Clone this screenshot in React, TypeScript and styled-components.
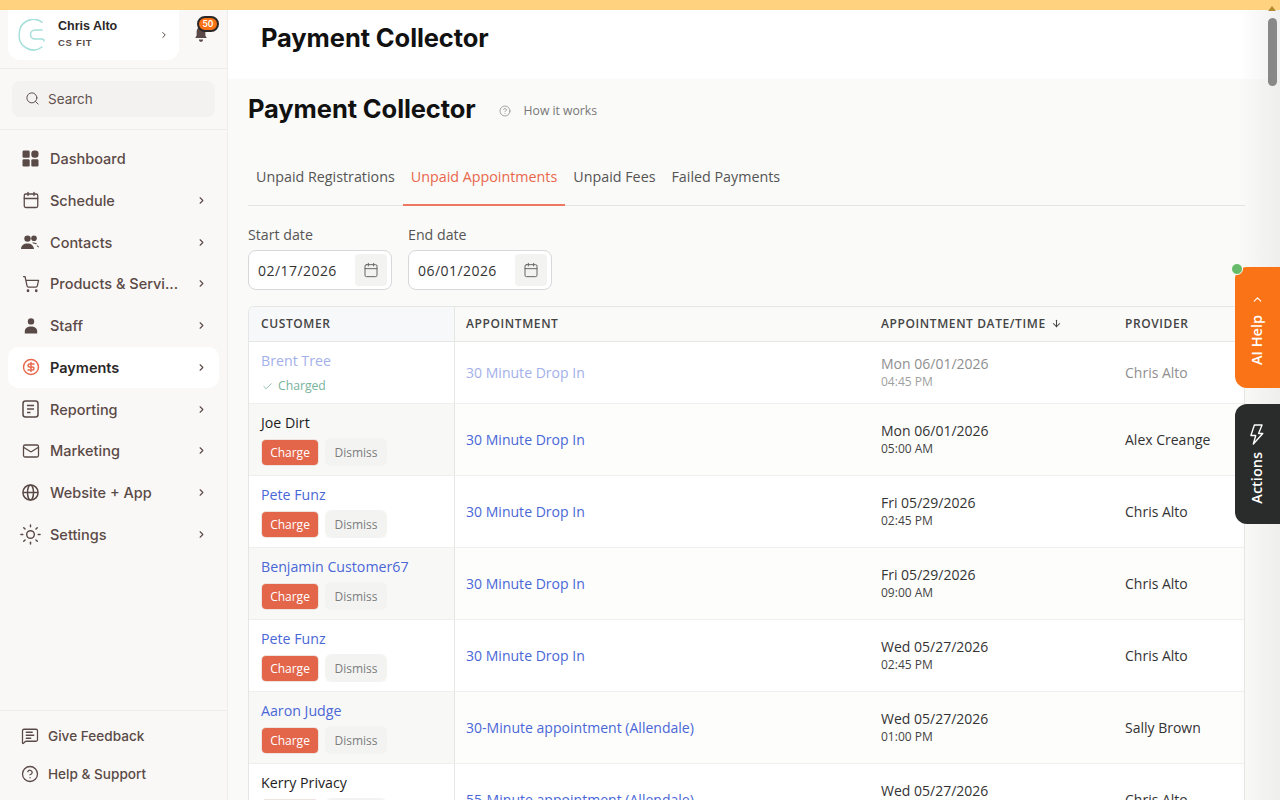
import React from 'react';
import styled, { createGlobalStyle } from 'styled-components';
import { Calendar, ChevronLeft, ChevronRight, CircleDollarSign, CircleHelp, Check, ArrowDown, Mail, Search, ShoppingCart, Sun, MessageSquareText } from 'lucide-react';

const Global = createGlobalStyle`
  html, body { margin: 0; padding: 0; height: 100%; overflow: hidden; background: #fafaf8; }
  * { box-sizing: border-box; }
`;

const Page = styled.div`
  position: relative; width: 1280px; height: 800px; overflow: hidden;
  display: flex; flex-direction: column;
  font-family: "Open Sans", sans-serif; color: #222;
`;
const Banner = styled.div`height: 10px; flex: none; background: #ffd27f;`;
const Body = styled.div`flex: 1; display: flex; min-height: 0;`;

const Sidebar = styled.aside`
  width: 228px; flex: none; background: #faf8f6; border-right: 1px solid #efedeb;
  display: flex; flex-direction: column; font-family: Inter, sans-serif;
`;
const ProfileSection = styled.div`
  height: 59px; flex: none; padding: 0 8px; display: flex; gap: 14px; border-bottom: 1px solid #efedeb;
`;
const ProfileCard = styled.div`
  width: 171px; height: 50px; background: #fff; border-radius: 0 0 12px 12px;
  display: flex; align-items: center; padding: 0 10px 0 10px;
`;
const ProfileText = styled.div`flex: 1; margin-left: 10px; padding-bottom: 3px; display: flex; flex-direction: column; gap: 4px;`;
const ProfileName = styled.div`font: 700 12.5px/14px "Liberation Sans", sans-serif; color: #2b2727;`;
const ProfileOrg = styled.div`font: 700 9.5px/11px "Liberation Sans", sans-serif; letter-spacing: .7px; color: #5a4a47;`;
const BellWrap = styled.div`position: relative; width: 22px; height: 40px; display: flex; align-items: center; padding: 8px 0 0 1px;`;
const Badge = styled.span`
  position: absolute; top: 6px; left: 4px; width: 22px; height: 16px; border-radius: 8px;
  background: #f97316; border: 2px solid #2b2727; color: #fff; font: 600 8.5px/12px Inter, sans-serif; text-align: center;
`;
const SearchSection = styled.div`
  height: 61px; flex: none; padding: 12px 12px; border-bottom: 1px solid #efedeb;
`;
const SearchBox = styled.div`
  width: 203px; height: 36px; border-radius: 8px; background: #f3f2f0; display: flex; align-items: center; gap: 8px; padding: 0 13px 1px;
  font-size: 13.5px; color: #5f514e;
`;
const Nav = styled.nav`flex: 1; padding: 7.75px 8px 0; display: flex; flex-direction: column;`;
const NavItem = styled.div<{ $active?: boolean }>`
  width: 211px; height: 41.75px; flex: none; display: flex; align-items: center; padding: 0 12px 0 13px; gap: 10px;
  border-radius: 10px; background: ${p => (p.$active ? '#fff' : 'transparent')};
  font-size: 14.5px; font-weight: ${p => (p.$active ? 600 : 500)}; color: ${p => (p.$active ? '#2b2727' : '#5a4a47')};
`;
const NavIcon = styled.span`
  width: 19px; height: 19px; flex: none; display: flex; align-items: center; justify-content: center;
  svg { flex: none; }
`;
const NavLabel = styled.span`flex: 1; white-space: nowrap;`;
const SideFooter = styled.div`
  height: 90px; flex: none; border-top: 1px solid #efedeb; padding: 6px 21px 0; display: flex; flex-direction: column;
`;
const FooterItem = styled.div`
  height: 38px; display: flex; align-items: center; gap: 9px; font-size: 13.6px; font-weight: 500; color: #5a4a47;
`;

const Main = styled.main`flex: 1; min-width: 0; display: flex; flex-direction: column;`;
const TopBar = styled.header`
  height: 69px; flex: none; background: #fff; padding: 12px 33px;
`;
const Heading = styled.h1`
  margin: 0; font: 700 25.5px/32px Inter, sans-serif; letter-spacing: -.1px; color: #111;
`;
const Content = styled.div`flex: 1; padding: 14px 35px 0 20px; background: #fafaf8; min-height: 0;`;
const TitleRow = styled.div`display: flex; align-items: center; height: 32px;`;
const HowItWorks = styled.div`display: flex; align-items: center; gap: 13px; margin-left: 23px; font-size: 12.2px; color: #777; padding-top: 3px;`;
const Tabs = styled.div`display: flex; margin-top: 35px; height: 46px; border-bottom: 1px solid #e4e4e2;`;
const Tab = styled.div<{ $active?: boolean }>`
  padding: 0 8px 11px; height: 46px; display: flex; align-items: center; font-size: 14.3px;
  color: ${p => (p.$active ? '#e8674c' : '#555')};
  border-bottom: 2px solid ${p => (p.$active ? '#ec7a62' : 'transparent')};
`;
const Filters = styled.div`display: flex; gap: 16px; margin-top: 19px;`;
const Field = styled.div`display: flex; flex-direction: column; gap: 6px;`;
const FieldLabel = styled.label`font-size: 14.2px; line-height: 19px; color: #555;`;
const DateBox = styled.div`
  width: 144px; height: 40px; border: 1px solid #d8d8dc; border-radius: 8px; background: #fff;
  display: flex; align-items: center; justify-content: space-between; padding: 0 4px 0 9px; font-size: 14px; letter-spacing: .45px; color: #333;
`;
const DateButton = styled.span`
  width: 32px; height: 32px; border-radius: 4px; background: #f3f3f2; display: flex; align-items: center; justify-content: center; color: #666;
`;
const Table = styled.div`
  margin-top: 16px; border: 1px solid #e6e6e4; border-bottom: 0; border-radius: 6px 6px 0 0; width: 997px; overflow: hidden;
`;
const COLS = '206px 414px 244px 1fr';
const HeadRow = styled.div`
  display: grid; grid-template-columns: ${COLS}; height: 35px; border-bottom: 1px solid #e6e6e4; background: #fafaf9;
`;
const HeadCell = styled.div<{ $first?: boolean; $inset?: number }>`
  display: flex; align-items: center; gap: 5px; padding: 0 0 2px ${p => p.$inset ?? 12}px;
  font-size: 12px; font-weight: 600; letter-spacing: .6px; color: #444;
  background: ${p => (p.$first ? '#f7f8fa' : 'transparent')};
  border-right: ${p => (p.$first ? '1px solid #e6e6e4' : '0')};
`;
const Row = styled.div<{ $h: number; $alt?: boolean; $faded?: boolean }>`
  display: grid; grid-template-columns: ${COLS}; height: ${p => p.$h}px; border-bottom: 1px solid #efefed;
  background: ${p => (p.$alt ? '#fdfdfc' : '#fff')};
  color: ${p => (p.$faded ? '#8f8f8f' : '#333')};
`;
const CustomerCell = styled.div<{ $alt?: boolean }>`
  padding: 9px 12px 0; border-right: 1px solid #e6e6e4; background: ${p => (p.$alt ? '#f8f8f7' : '#fff')};
  display: flex; flex-direction: column; gap: 6px;
`;
const Cell = styled.div<{ $inset?: number }>`
  display: flex; flex-direction: column; justify-content: center; padding-left: ${p => p.$inset ?? 12}px; font-size: 14px;
`;
const DateCell = styled(Cell)`padding-bottom: 2px;`;
const CustomerLink = styled.span<{ $faded?: boolean }>`
  font-size: 14.2px; line-height: 19px; color: ${p => (p.$faded ? '#a3b0ea' : '#4a67d6')};
`;
const Anchor = styled.span<{ $faded?: boolean }>`
  font-size: 14.05px; line-height: 19px; color: ${p => (p.$faded ? '#a3b0ea' : '#4a67d6')};
`;
const Plain = styled.span`font-size: 14.2px; line-height: 19px; color: #1d1d1d;`;
const Status = styled.span`display: flex; align-items: center; gap: 5px; margin-top: 1px; padding-left: 1px; font-size: 12.2px; line-height: 18px; color: #78b39b;`;
const Actions = styled.div`display: flex; gap: 7px; align-items: center;`;
const ChargeBtn = styled.span`
  width: 56px; height: 25px; margin-left: 1px; border-radius: 4px; background: #e3664a; color: #fff; font-size: 12px;
  display: flex; align-items: center; justify-content: center; box-shadow: 0 0 0 1px #efe3df;
`;
const DismissBtn = styled.span`
  width: 62px; height: 28px; border-radius: 6px; background: #f3f3f2; color: #7d7d7d; font-size: 12px;
  display: flex; align-items: center; justify-content: center;
`;
const DateText = styled.span<{ $faded?: boolean }>`font-size: 14px; line-height: 19px; color: ${p => (p.$faded ? '#8f8f8f' : '#333')};`;
const TimeText = styled.span<{ $faded?: boolean }>`font-size: 12px; line-height: 17px; color: ${p => (p.$faded ? '#a0a0a0' : '#444')};`;

const ScrollShade = styled.div`
  position: absolute; top: 10px; right: 0; bottom: 0; width: 40px; pointer-events: none;
  background: linear-gradient(to right, rgba(228,228,228,0), rgba(228,228,228,.55));
`;
const ScrollArrow = styled.div`
  position: absolute; top: 6px; right: 4px; width: 0; height: 0;
  border-left: 4px solid transparent; border-right: 4px solid transparent; border-bottom: 5px solid #b5892f;
`;
const ScrollThumb = styled.div`
  position: absolute; top: 18px; right: 3px; width: 9px; height: 68px; border-radius: 5px; background: #888;
`;
const SideTab = styled.div<{ $bg: string; $top: number; $h: number }>`
  position: absolute; right: 0; top: ${p => p.$top}px; width: 45px; height: ${p => p.$h}px; background: ${p => p.$bg};
  border-radius: 12px 0 0 12px; color: #fff; display: flex; flex-direction: column; align-items: center; padding-right: 1px;
`;
const SideTabLabel = styled.span`
  writing-mode: vertical-rl; transform: rotate(180deg); font-size: 14.5px; line-height: 20px; font-weight: 600;
`;
const AiHelpBody = styled.div`display: flex; flex-direction: column; align-items: center; gap: 9px; padding-top: 26px;`;
const ActionsBody = styled.div`display: flex; flex-direction: column; align-items: center; gap: 7px; padding-top: 20px;`;
const GreenDot = styled.span`
  position: absolute; left: 1231px; top: 263px; width: 12px; height: 12px; border-radius: 50%; background: #66bb6a; border: 1.5px solid #fff;
`;

const ic = { size: 18, strokeWidth: 1.7 };
const DashboardIcon = () => (
  <svg width="17" height="17" viewBox="0 0 17 17" fill="#5a4a47">
    <rect x="0.5" y="0.5" width="7.2" height="7.2" rx="1.3" /><rect x="9.3" y="0.5" width="7.2" height="7.2" rx="3" />
    <rect x="0.5" y="9.3" width="7.2" height="7.2" rx="1.3" /><rect x="9.3" y="9.3" width="7.2" height="7.2" rx="1.3" />
  </svg>
);
const ContactsIcon = () => (
  <svg width="19" height="15" viewBox="0 0 19 15" fill="#5a4a47">
    <circle cx="6.5" cy="3.6" r="3.2" /><circle cx="13" cy="3.2" r="2.8" />
    <path d="M0 14c0-3.6 2.8-5.6 6.5-5.6S12.5 10.4 13 14z" />
    <path d="M11 7.6c2.2-.6 4 .1 5 1.2l-1 .8c-1-.9-2-1-3-1z" />
    <path d="M16.4 10.2l1.8 1.7-.7.7-1.8-1.7z" />
  </svg>
);
const StaffIcon = () => (
  <svg width="14" height="16" viewBox="0 0 14 16" fill="#5a4a47">
    <circle cx="7" cy="3.4" r="3.2" /><path d="M.8 15.6v-2.2C.8 10.6 3.4 8.6 7 8.6s6.2 2 6.2 4.8v2.2z" />
  </svg>
);
const ReportIcon = () => (
  <svg width="17" height="18" viewBox="0 0 17 18" fill="none" stroke="#5a4a47" strokeWidth="1.5">
    <rect x="1" y="1" width="15" height="16" rx="2.5" />
    <path d="M5 5.5h7M5 9h7M5 12.5h3.5" />
  </svg>
);
const GlobeIcon = () => (
  <svg width="17" height="17" viewBox="0 0 17 17" fill="none" stroke="#5a4a47" strokeWidth="1.5">
    <circle cx="8.5" cy="8.5" r="7.6" /><ellipse cx="8.5" cy="8.5" rx="3" ry="7.6" /><path d="M1 8.5h15" />
  </svg>
);
const BellIcon = () => (
  <svg width="14" height="17" viewBox="0 0 16 17" fill="#5a4a47" preserveAspectRatio="none">
    <path d="M8 .8c3 0 5 2.3 5 5.2v3.4l1.6 2.6H1.4L3 9.4V6C3 3.1 5 .8 8 .8z" /><path d="M5.6 13.4h4.8C10.2 15 9.3 15.8 8 15.8s-2.2-.8-2.4-2.4z" />
  </svg>
);
const Logo = () => (
  <svg width="30" height="32" viewBox="0 0 30 32" fill="none" stroke="#a5dfda" strokeWidth="1.5" strokeLinecap="round">
    <path d="M24 3.2A14.200 14.200 0 0 0 1.300 15a14.200 14.200 0 0 0 22.700 13" />
    <path d="M24 11H17a4.500 4.500 0 0 0 0 9h7a2 2 0 0 1 2 2" />
  </svg>
);
const BoltIcon = () => (
  <svg width="14" height="21" viewBox="0 0 13 20" fill="none" stroke="#fff" strokeWidth="1.3" strokeLinejoin="round">
    <path d="M4 1h7.300L8 9h4L3 19l2.300-8H.7z" />
  </svg>
);

const Chev = ({ size = 11, color = '#5a4a47' }: { size?: number; color?: string }) => <ChevronRight size={size} color={color} strokeWidth={2.4} />;

const navItems: { label: string; icon: React.ReactNode; active?: boolean; noChev?: boolean }[] = [
  { label: 'Dashboard', icon: <DashboardIcon />, noChev: true },
  { label: 'Schedule', icon: <Calendar {...ic} color="#5a4a47" /> },
  { label: 'Contacts', icon: <ContactsIcon /> },
  { label: 'Products & Servi...', icon: <ShoppingCart {...ic} color="#5a4a47" /> },
  { label: 'Staff', icon: <StaffIcon /> },
  { label: 'Payments', icon: <CircleDollarSign size={18} strokeWidth={1.9} color="#e8674c" />, active: true },
  { label: 'Reporting', icon: <ReportIcon /> },
  { label: 'Marketing', icon: <Mail {...ic} color="#5a4a47" /> },
  { label: 'Website + App', icon: <GlobeIcon /> },
  { label: 'Settings', icon: <Sun size={23} strokeWidth={1.5} color="#5a4a47" /> },
];

type R = { name: string; link?: boolean; appt: string; date: string; time: string; prov: string; h: number; charged?: boolean; alt?: boolean };
const rows: R[] = [
  { name: 'Brent Tree', link: true, appt: '30 Minute Drop In', date: 'Mon 06/01/2026', time: '04:45 PM', prov: 'Chris Alto', h: 62, charged: true },
  { name: 'Joe Dirt', appt: '30 Minute Drop In', date: 'Mon 06/01/2026', time: '05:00 AM', prov: 'Alex Creange', h: 72, alt: true },
  { name: 'Pete Funz', link: true, appt: '30 Minute Drop In', date: 'Fri 05/29/2026', time: '02:45 PM', prov: 'Chris Alto', h: 72 },
  { name: 'Benjamin Customer67', link: true, appt: '30 Minute Drop In', date: 'Fri 05/29/2026', time: '09:00 AM', prov: 'Chris Alto', h: 72, alt: true },
  { name: 'Pete Funz', link: true, appt: '30 Minute Drop In', date: 'Wed 05/27/2026', time: '02:45 PM', prov: 'Chris Alto', h: 72 },
  { name: 'Aaron Judge', link: true, appt: '30-Minute appointment (Allendale)', date: 'Wed 05/27/2026', time: '01:00 PM', prov: 'Sally Brown', h: 72, alt: true },
  { name: 'Kerry Privacy', appt: '55-Minute appointment (Allendale)', date: 'Wed 05/27/2026', time: '11:00 AM', prov: 'Chris Alto', h: 72 },
];

export default function App() {
  return (
    <Page>
      <Global />
      <Banner />
      <Body>
        <Sidebar>
          <ProfileSection>
            <ProfileCard>
              <Logo />
              <ProfileText>
                <ProfileName>Chris Alto</ProfileName>
                <ProfileOrg>CS FIT</ProfileOrg>
              </ProfileText>
              <Chev size={10} />
            </ProfileCard>
            <BellWrap>
              <BellIcon />
              <Badge>50</Badge>
            </BellWrap>
          </ProfileSection>
          <SearchSection>
            <SearchBox><Search size={15} strokeWidth={1.6} color="#5f514e" />Search</SearchBox>
          </SearchSection>
          <Nav>
            {navItems.map(n => (
              <NavItem key={n.label} $active={n.active}>
                <NavIcon>{n.icon}</NavIcon>
                <NavLabel>{n.label}</NavLabel>
                {!n.noChev && <Chev />}
              </NavItem>
            ))}
          </Nav>
          <SideFooter>
            <FooterItem><MessageSquareText {...ic} color="#5a4a47" />Give Feedback</FooterItem>
            <FooterItem><CircleHelp {...ic} color="#5a4a47" />Help &amp; Support</FooterItem>
          </SideFooter>
        </Sidebar>
        <Main>
          <TopBar><Heading>Payment Collector</Heading></TopBar>
          <Content>
            <TitleRow>
              <Heading>Payment Collector</Heading>
              <HowItWorks><CircleHelp size={12} strokeWidth={1.5} color="#888" />How it works</HowItWorks>
            </TitleRow>
            <Tabs>
              <Tab>Unpaid Registrations</Tab>
              <Tab $active>Unpaid Appointments</Tab>
              <Tab>Unpaid Fees</Tab>
              <Tab>Failed Payments</Tab>
            </Tabs>
            <Filters>
              <Field>
                <FieldLabel>Start date</FieldLabel>
                <DateBox>02/17/2026<DateButton><Calendar size={16} strokeWidth={1.5} /></DateButton></DateBox>
              </Field>
              <Field>
                <FieldLabel>End date</FieldLabel>
                <DateBox>06/01/2026<DateButton><Calendar size={16} strokeWidth={1.5} /></DateButton></DateBox>
              </Field>
            </Filters>
            <Table>
              <HeadRow>
                <HeadCell $first>CUSTOMER</HeadCell>
                <HeadCell $inset={11}>APPOINTMENT</HeadCell>
                <HeadCell>APPOINTMENT DATE/TIME <ArrowDown size={11} strokeWidth={2.2} /></HeadCell>
                <HeadCell>PROVIDER</HeadCell>
              </HeadRow>
              {rows.map((r, i) => (
                <Row key={i} $h={r.h} $alt={r.alt} $faded={r.charged}>
                  <CustomerCell $alt={r.alt}>
                    {r.link ? <CustomerLink $faded={r.charged}>{r.name}</CustomerLink> : <Plain>{r.name}</Plain>}
                    {r.charged ? (
                      <Status><Check size={11} strokeWidth={1.8} color="#78b39b" />Charged</Status>
                    ) : (
                      <Actions><ChargeBtn>Charge</ChargeBtn><DismissBtn>Dismiss</DismissBtn></Actions>
                    )}
                  </CustomerCell>
                  <Cell $inset={11}><Anchor $faded={r.charged}>{r.appt}</Anchor></Cell>
                  <DateCell>
                    <DateText $faded={r.charged}>{r.date}</DateText>
                    <TimeText $faded={r.charged}>{r.time}</TimeText>
                  </DateCell>
                  <Cell>{r.prov}</Cell>
                </Row>
              ))}
            </Table>
          </Content>
        </Main>
      </Body>
      <ScrollShade />
      <ScrollArrow />
      <ScrollThumb />
      <SideTab $bg="#fa7317" $top={267} $h={121}>
        <AiHelpBody>
          <ChevronLeft size={13} strokeWidth={2} style={{ transform: 'rotate(90deg)' }} />
          <SideTabLabel>AI Help</SideTabLabel>
        </AiHelpBody>
      </SideTab>
      <GreenDot />
      <SideTab $bg="#2a2b2b" $top={404} $h={120}>
        <ActionsBody>
          <BoltIcon />
          <SideTabLabel>Actions</SideTabLabel>
        </ActionsBody>
      </SideTab>
    </Page>
  );
}
